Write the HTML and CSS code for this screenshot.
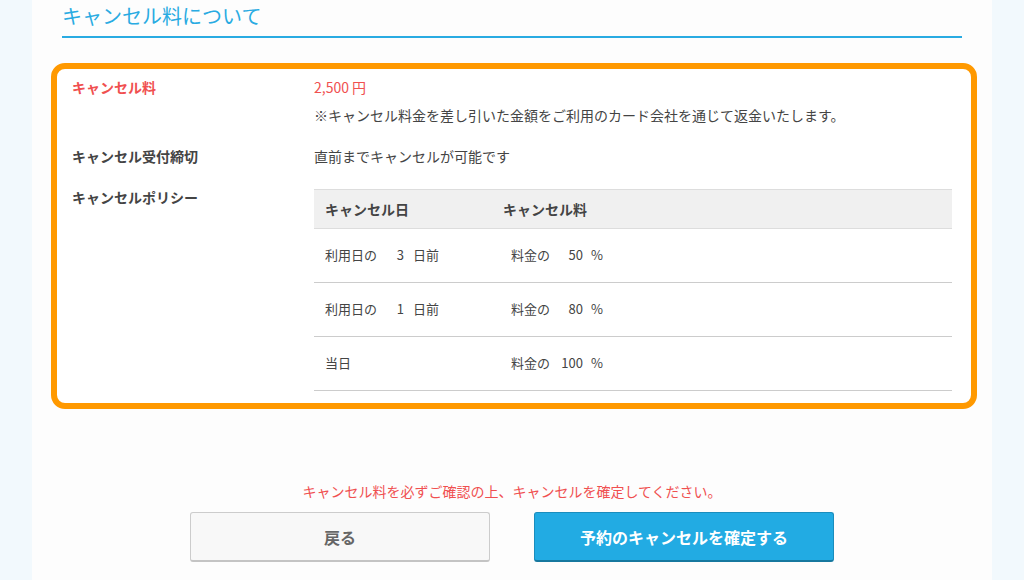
FILE: index.html
```html
<!DOCTYPE html>
<html lang="ja">

<head>
    <meta charset="UTF-8">
    <meta name="viewport" content="width=device-width, initial-scale=1.0">
    <title>キャンセル料について</title>
    <link rel="stylesheet" href="styles.css">
</head>

<body>
    <div class="page">
        <h2 class="sectionTitle">キャンセル料について</h2>

        <div class="cancelBox">
            <div class="infoRow">
                <div class="infoLabel red">キャンセル料</div>
                <div class="infoValue">
                    <p class="red">2,500 円</p>
                    <p class="note">※キャンセル料金を差し引いた金額をご利用のカード会社を通じて返金いたします。</p>
                </div>
            </div>

            <div class="infoRow">
                <div class="infoLabel">キャンセル受付締切</div>
                <div class="infoValue">
                    <p>直前までキャンセルが可能です</p>
                </div>
            </div>

            <div class="infoRow">
                <div class="infoLabel">キャンセルポリシー</div>
                <div class="infoValue">
                    <table class="policyTable">
                        <tr>
                            <th class="dayCol">キャンセル日</th>
                            <th>キャンセル料</th>
                        </tr>
                        <tr>
                            <td>利用日の<span class="num">3</span>日前</td>
                            <td><span class="rate">料金の<span class="num wide">50</span>%</span></td>
                        </tr>
                        <tr>
                            <td>利用日の<span class="num">1</span>日前</td>
                            <td><span class="rate">料金の<span class="num wide">80</span>%</span></td>
                        </tr>
                        <tr>
                            <td>当日</td>
                            <td><span class="rate">料金の<span class="num wide">100</span>%</span></td>
                        </tr>
                    </table>
                </div>
            </div>
        </div>

        <p class="warning">キャンセル料を必ずご確認の上、キャンセルを確定してください。</p>

        <div class="buttons">
            <button class="btn btnBack">戻る</button>
            <button class="btn btnConfirm">予約のキャンセルを確定する</button>
        </div>
    </div>
</body>

</html>
```

FILE: styles.css
```css
html,
body {
    margin: 0;
    height: 100%;
}

body {
    background-color: #f2f9fd;
    font-family: "Noto Sans CJK JP", "Noto Sans", sans-serif;
    font-size: 14px;
    color: #444;
}

.page {
    width: 960px;
    min-height: 100%;
    margin-left: 32px;
    padding: 1px 30px 0;
    box-sizing: border-box;
    background-color: #fdfdfd;
}

.sectionTitle {
    margin: 0;
    padding-bottom: 5px;
    font-size: 20px;
    font-weight: normal;
    line-height: 30px;
    color: #29abe2;
    border-bottom: 2px solid #29abe2;
}

.cancelBox {
    margin: 25px -15px 0 -11px;
    padding: 8px 19px 12px 15px;
    border: 6px solid #ff9900;
    border-radius: 14px;
    background-color: #fff;
}

.infoRow {
    display: flex;
    margin-bottom: 21px;
}

.infoRow:last-child {
    margin-bottom: 0;
}

.infoLabel {
    width: 242px;
    flex-shrink: 0;
    font-weight: bold;
    line-height: 20px;
}

.infoValue {
    flex: 1;
    line-height: 20px;
}

.infoValue p {
    margin: 0;
}

.infoValue .note {
    margin-top: 8px;
}

.red {
    color: #f05050;
}

.policyTable {
    width: 100%;
    margin-top: 2px;
    table-layout: fixed;
    border-collapse: collapse;
    border-top: 1px solid #ddd;
}

.policyTable th {
    height: 38px;
    padding: 0 11px;
    background-color: #f0f0f0;
    border-bottom: 1px solid #ddd;
    text-align: left;
    font-weight: bold;
}

.policyTable .dayCol {
    width: 156px;
}

.policyTable td {
    height: 52px;
    padding: 0 11px 1px;
    border-bottom: 1px solid #ccc;
    font-size: 13px;
}

.rate {
    padding-left: 8px;
}

.num {
    display: inline-block;
    width: 24px;
    margin: 0 9px 0 3px;
    text-align: right;
}

.num.wide {
    width: 30px;
    margin-right: 8px;
}

.warning {
    margin: 72px 0 0;
    line-height: 20px;
    text-align: center;
    color: #f05050;
}

.buttons {
    display: flex;
    justify-content: center;
    gap: 44px;
    margin-top: 11px;
}

.btn {
    width: 300px;
    height: 50px;
    border-radius: 3px;
    font-family: inherit;
    font-size: 16px;
    font-weight: bold;
}

.btnBack {
    background-color: #f8f8f8;
    color: #666;
    border: 1px solid #ccc;
    border-bottom: 2px solid #c4c4c4;
}

.btnConfirm {
    background-color: #22abe3;
    color: #fff;
    border: 1px solid #1a8dbd;
    border-bottom: 2px solid #17789f;
}
```
